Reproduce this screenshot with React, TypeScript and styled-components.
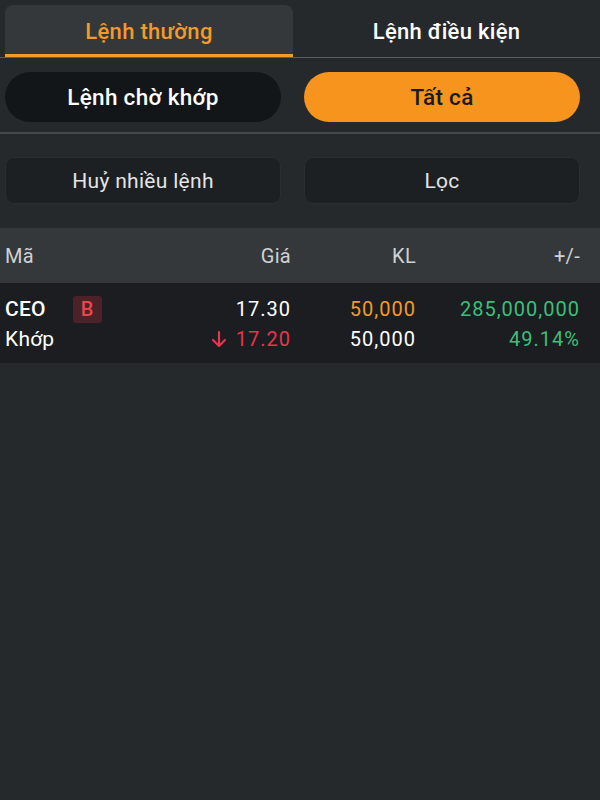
import React from "react";
import styled, { createGlobalStyle } from "styled-components";

const Global = createGlobalStyle`
  html, body { margin: 0; padding: 0; background: #25292c; }
  body { font-family: Roboto, "Noto Sans", sans-serif; letter-spacing: 0.3px; }
  #root { min-height: 800px; background: #25292c; }
`;

const Page = styled.div`
  width: 600px;
  min-height: 800px;
  background: #25292c;
  color: #fff;
  display: flex;
  flex-direction: column;
`;

const TabBar = styled.div`
  display: grid;
  grid-template-columns: 288px 1fr;
  padding: 5px 0 0 5px;
  border-bottom: 1px solid #5a5e62;
`;

const Tab = styled.div<{ $active?: boolean }>`
  height: 52px;
  box-sizing: border-box;
  padding-top: 3px;
  display: flex;
  align-items: center;
  justify-content: center;
  font-size: 22px;
  font-weight: 500;
  color: ${(p) => (p.$active ? "#f39a2b" : "#ffffff")};
  background: ${(p) => (p.$active ? "#34383b" : "transparent")};
  border-radius: 8px 8px 0 0;
  border-bottom: 3px solid ${(p) => (p.$active ? "#f39a2b" : "transparent")};
`;

const SegRow = styled.div`
  display: grid;
  grid-template-columns: 276px 276px;
  justify-content: space-between;
  padding: 14px 20px 10px 5px;
  border-bottom: 2px solid #45494d;
`;

const Pill = styled.div<{ $active?: boolean }>`
  height: 50px;
  border-radius: 25px;
  display: flex;
  align-items: center;
  justify-content: center;
  font-size: 22.5px;
  font-weight: 500;
  background: ${(p) => (p.$active ? "#f7941d" : "#131619")};
  color: ${(p) => (p.$active ? "#1a1a1a" : "#ffffff")};
`;

const ActionRow = styled.div`
  display: grid;
  grid-template-columns: 276px 276px;
  justify-content: space-between;
  padding: 23px 20px 24px 5px;
`;

const ActionButton = styled.div`
  height: 45px;
  border-radius: 9px;
  display: flex;
  align-items: center;
  justify-content: center;
  font-size: 21px;
  color: #e4e4e4;
  background: #1d2023;
  border: 1px solid #2a2e31;
`;

const cols = "166px 120px 125px 164px";

const HeaderRow = styled.div`
  display: grid;
  grid-template-columns: ${cols};
  align-items: center;
  height: 55px;
  padding: 0 20px 0 5px;
  background: #34383b;
  color: #cfd1d3;
  font-size: 20px;
`;

const Cell = styled.div<{ $align?: "left" | "right"; $color?: string; $weight?: number }>`
  text-align: ${(p) => p.$align ?? "right"};
  color: ${(p) => p.$color ?? "inherit"};
  font-weight: ${(p) => p.$weight ?? 400};
  white-space: nowrap;
`;

const DataRow = styled.div`
  display: grid;
  grid-template-columns: ${cols};
  grid-auto-rows: 30px;
  align-items: center;
  padding: 11px 20px 9px 5px;
  background: #1b1d20;
  font-size: 20px;
  letter-spacing: 1px;
  color: #ffffff;
`;

const CodeCell = styled.div`
  display: flex;
  align-items: center;
  gap: 27px;
  font-size: 21px;
  font-weight: 500;
  letter-spacing: 0.2px;
`;

const Badge = styled.span`
  width: 29px;
  height: 27px;
  border-radius: 3px;
  background: #4a2228;
  color: #e8474c;
  font-size: 20px;
  font-weight: 500;
  display: inline-flex;
  align-items: center;
  justify-content: center;
`;

const MatchLabel = styled.div`
  font-size: 21px;
  letter-spacing: 0.2px;
`;

const PriceDown = styled.div`
  display: flex;
  align-items: center;
  justify-content: flex-end;
  gap: 9px;
  color: #e8344e;
`;

export default function App() {
  return (
    <>
      <Global />
      <Page>
        <TabBar>
          <Tab $active>Lệnh thường</Tab>
          <Tab>Lệnh điều kiện</Tab>
        </TabBar>
        <SegRow>
          <Pill>Lệnh chờ khớp</Pill>
          <Pill $active>Tất cả</Pill>
        </SegRow>
        <ActionRow>
          <ActionButton>Huỷ nhiều lệnh</ActionButton>
          <ActionButton>Lọc</ActionButton>
        </ActionRow>
        <HeaderRow>
          <Cell $align="left">Mã</Cell>
          <Cell>Giá</Cell>
          <Cell>KL</Cell>
          <Cell>+/-</Cell>
        </HeaderRow>
        <DataRow>
          <CodeCell>
            CEO <Badge>B</Badge>
          </CodeCell>
          <Cell>17.30</Cell>
          <Cell $color="#f39a2b">50,000</Cell>
          <Cell $color="#3dbf7a">285,000,000</Cell>
          <MatchLabel>Khớp</MatchLabel>
          <PriceDown>
            <svg width="16" height="18" viewBox="0 0 16 18" fill="none" stroke="#e8344e" strokeWidth="2.2" strokeLinecap="round" strokeLinejoin="round">
              <path d="M8 2v14M2 10l6 6 6-6" />
            </svg>
            <span>17.20</span>
          </PriceDown>
          <Cell>50,000</Cell>
          <Cell $color="#3dbf7a">49.14%</Cell>
        </DataRow>
      </Page>
    </>
  );
}
